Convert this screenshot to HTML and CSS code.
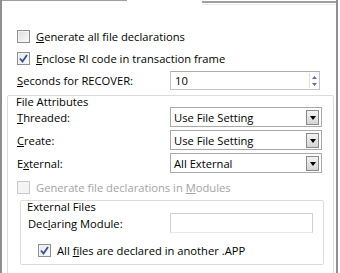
FILE: index.html
```html
<!DOCTYPE html>
<html>
<head lang="en">
    <meta charset="UTF-8">
    <title>File options</title>
    <link rel="stylesheet" href="styles.css">
</head>
<body>

<div class="frame">
    <div class="topline">
        <div class="seg seg-left"></div>
        <div class="seg seg-gap"></div>
        <div class="seg seg-right"></div>
    </div>

    <div class="page">
        <label class="check-row row-first">
            <span class="cb"></span>
            <span><u>G</u>enerate all file declarations</span>
        </label>
        <label class="check-row">
            <span class="cb cb-on"><svg width="9" height="9" viewBox="0 0 9 9"><path d="M1 4.5 L3.5 7.5 L8 1" fill="none" stroke="#3b4f8c" stroke-width="1.8"/></svg></span>
            <span><u>E</u>nclose RI code in transaction frame</span>
        </label>
        <div class="field-row spin-row">
            <span class="label"><u>S</u>econds for RECOVER:</span>
            <div class="spin">
                <span class="value">10</span>
                <span class="spin-btns">
                    <svg width="5" height="12" viewBox="0 0 5 12"><path d="M0 4 L2.5 1 L5 4 Z M0 8 L2.5 11 L5 8 Z" fill="#5a6fb4"/></svg>
                </span>
            </div>
        </div>

        <div class="group attrs">
            <div class="legend">File Attributes</div>
            <div class="field-row combo-row">
                <span class="label"><u>T</u>hreaded:</span>
                <div class="combo"><span class="value">Use File Setting</span><span class="drop"></span></div>
            </div>
            <div class="field-row combo-row">
                <span class="label"><u>C</u>reate:</span>
                <div class="combo"><span class="value">Use File Setting</span><span class="drop"></span></div>
            </div>
            <div class="field-row combo-row">
                <span class="label">E<u>x</u>ternal:</span>
                <div class="combo"><span class="value">All External</span><span class="drop"></span></div>
            </div>
            <label class="check-row disabled">
                <span class="cb"></span>
                <span>Generate file declarations in <u>M</u>odules</span>
            </label>

            <div class="group ext">
                <div class="legend">External Files</div>
                <div class="field-row text-row">
                    <span class="label">Dec<u>l</u>aring Module:</span>
                    <div class="textbox"></div>
                </div>
                <label class="check-row inner-check">
                    <span class="cb cb-on"><svg width="9" height="9" viewBox="0 0 9 9"><path d="M1 4.5 L3.5 7.5 L8 1" fill="none" stroke="#3b4f8c" stroke-width="1.8"/></svg></span>
                    <span>All <u>f</u>iles are declared in another .APP</span>
                </label>
            </div>
        </div>
    </div>
</div>

</body>
</html>
```

FILE: styles.css
```css
html, body {
    margin: 0;
    padding: 0;
    background: #fff;
}
body {
    font-family: "Open Sans", "Noto Sans", sans-serif;
    font-size: 11.2px;
    color: #000;
}
u {
    text-decoration: underline;
    text-underline-offset: 1px;
}
.frame {
    width: 334px;
    height: 273px;
    border-left: 2px solid #8f8f8f;
    border-right: 2px solid #8f8f8f;
    overflow: hidden;
}
.topline {
    display: flex;
    height: 5px;
}
.seg-left {
    width: 125px;
    border-top: 1px solid #a0a0a0;
}
.seg-gap {
    width: 75px;
}
.seg-right {
    flex: 1;
    border-top: 2px solid #a0a0a0;
    margin-top: 1px;
    border-bottom: 1px solid #ececec;
    height: 1px;
}
.page {
    padding: 20px 0 0 5px;
}

/* checkbox rows */
.check-row {
    display: flex;
    align-items: center;
    height: 22px;
    padding-left: 10px;
}
.check-row .cb {
    margin-right: 6px;
}
.cb {
    box-sizing: border-box;
    width: 13px;
    height: 13px;
    border: 1px solid #8e8f8f;
    background: linear-gradient(135deg, #dcdcdc, #fbfbfb);
    box-shadow: inset 0 0 0 1px #f4f4f4;
    display: flex;
    align-items: center;
    justify-content: center;
    flex: none;
}
.cb-on {
    background: linear-gradient(135deg, #e4e8f2, #fbfbfb);
}
.disabled {
    color: #a3a3a3;
}
.disabled .cb {
    border-color: #c8c8c8;
    background: #f4f4f4;
}

/* label + control rows */
.field-row {
    display: flex;
    align-items: center;
    padding-left: 10px;
}
.field-row .label {
    width: 153px;
    flex: none;
}
.spin-row {
    margin-top: 2px;
    height: 19px;
}
.spin, .combo, .textbox {
    box-sizing: border-box;
    display: flex;
    align-items: center;
    background: #fff;
}
.spin {
    width: 150px;
    height: 19px;
    border: 1px solid #c5c5c5;
    border-top-color: #abadb3;
}
.spin .value {
    flex: 1;
    padding-left: 4px;
}
.spin-btns {
    width: 8px;
    height: 15px;
    margin-right: 1px;
    border-left: 1px solid #e0e0e0;
    display: flex;
    align-items: center;
    justify-content: center;
}

/* group boxes */
.group {
    border: 1px solid #dcdcdc;
    border-radius: 2px;
}
.attrs {
    margin: 5px 2px 0 0;
    height: 200px;
}
.attrs .field-row,
.attrs .check-row {
    padding-left: 9px;
}
.legend {
    height: 11px;
    line-height: 11px;
    padding-left: 8px;
}
.combo-row {
    height: 20px;
    margin-bottom: 3px;
}
.combo-row:last-of-type {
    margin-bottom: 2px;
}
.combo {
    width: 152px;
    height: 20px;
    border: 1px solid #a9a9a9;
}
.combo .value {
    flex: 1;
    padding-left: 3px;
}
.drop {
    box-sizing: border-box;
    width: 13px;
    height: 15px;
    margin-right: 2px;
    border: 1px solid #8a8a8a;
    background: linear-gradient(#f3f3f3, #d4d4d4);
    position: relative;
}
.drop::after {
    content: "";
    position: absolute;
    left: 3px;
    top: 5px;
    border-left: 3px solid transparent;
    border-right: 3px solid transparent;
    border-top: 4px solid #000;
}

.ext {
    margin: 2px 9px 0 12px;
    padding-bottom: 3px;
}
.ext .legend {
    padding-left: 6px;
}
.ext .field-row {
    padding-left: 7px;
}
.text-row {
    height: 20px;
    margin-top: 1px;
}
.ext .text-row .label {
    width: 142px;
}
.textbox {
    width: 143px;
    height: 20px;
    border: 1px solid #d0d0d0;
    border-bottom-color: #e8e8e8;
}
.inner-check {
    margin-top: 6px;
}
.ext .inner-check {
    padding-left: 17px;
}
```
